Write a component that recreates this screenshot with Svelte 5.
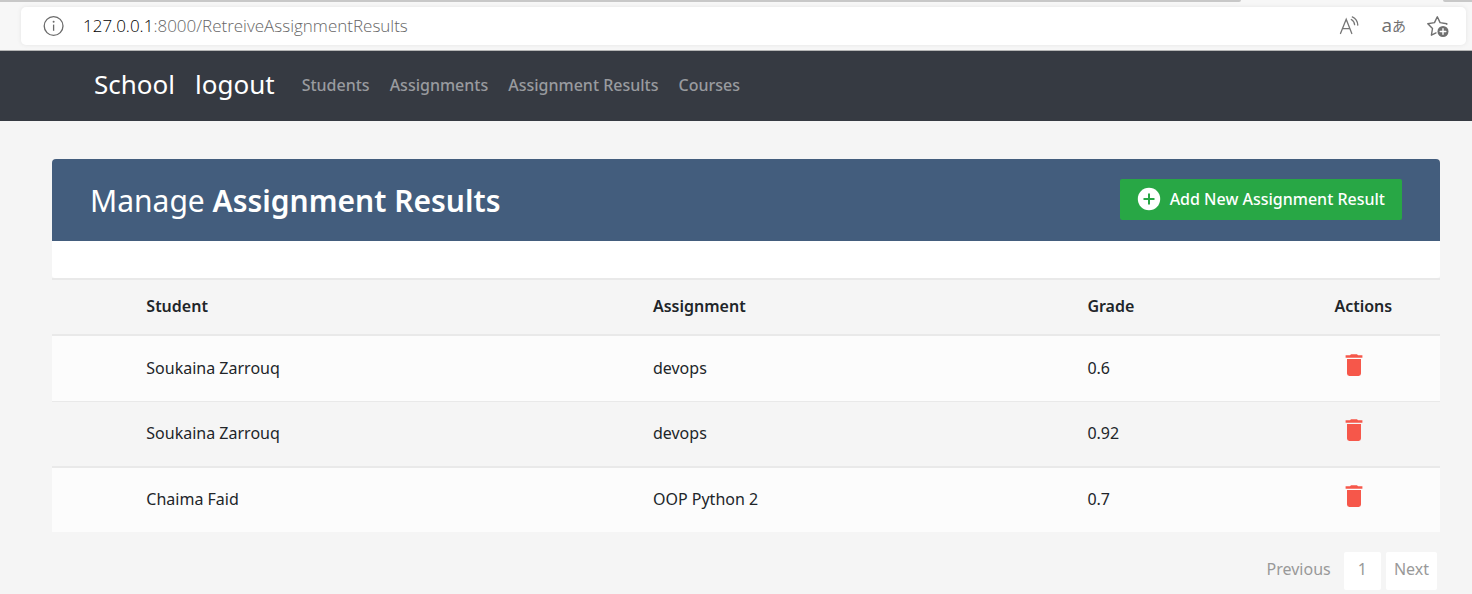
<script>
  const links = ['Students', 'Assignments', 'Assignment Results', 'Courses'];
  const results = [
    { student: 'Soukaina Zarrouq', assignment: 'devops', grade: '0.6' },
    { student: 'Soukaina Zarrouq', assignment: 'devops', grade: '0.92' },
    { student: 'Chaima Faid', assignment: 'OOP Python 2', grade: '0.7' }
  ];
</script>

<header class="browser">
  <div class="tabs"><span class="tab"></span><span class="tab end"></span></div>
  <div class="address">
    <svg width="22" height="22" viewBox="0 0 22 22" fill="none" stroke="#6b6b6b" stroke-width="1.3" aria-hidden="true">
      <circle cx="10.600" cy="11" r="9.4" />
      <path d="M10.600 9.600v6.200" />
      <circle cx="10.600" cy="6.800" r="1" fill="#6b6b6b" stroke="none" />
    </svg>
    <p class="url"><span>127.0.0.1</span>:8000/RetreiveAssignmentResults</p>
    <div class="tools">
      <button aria-label="Read aloud">
        <svg width="24" height="24" viewBox="0 0 24 24" fill="none" stroke="#767676" stroke-width="1.3" stroke-linecap="round">
          <path d="M3.500 19.500 9.200 5.300l5.600 14.200M5.500 14.700h7.400M14.300 5.500c2.200 1.200 3.200 3 3.300 5.200M15.300 2.900c3.500 1.600 5.300 4.600 5.500 8.200" />
        </svg>
      </button>
      <button class="translate" aria-label="Translate"><span>a</span><span class="kana">あ</span></button>
      <button aria-label="Add to favorites">
        <svg width="24" height="24" viewBox="0 0 24 24" fill="none" stroke="#707070" stroke-width="1.4" stroke-linejoin="round" stroke-linecap="round">
          <path d="M20.800 10.300v-.6l-6.700-1.100L11.300 2.800 8.500 8.600l-6.700 1.100 4.700 4.800-1.100 6.700 4.600-2.300" />
          <circle cx="17" cy="17.500" r="5.500" fill="#707070" stroke="none" />
          <path d="M17 14.700v5.600M14.200 17.500h5.600" stroke="#fff" />
        </svg>
      </button>
    </div>
  </div>
</header>

<nav>
  <a class="brand" href="#school">School</a>
  <a class="brand logout" href="#logout">logout</a>
  {#each links as link}
    <a href="#{link}">{link}</a>
  {/each}
</nav>

<main>
  <section class="title">
    <h2>Manage <b>Assignment Results</b></h2>
    <button class="add">
      <svg width="24" height="24" viewBox="0 0 24 24" aria-hidden="true">
        <circle cx="12" cy="12" r="11.200" fill="#fff" />
        <path d="M12 6.500v11M6.500 12h11" stroke="#28a745" stroke-width="2" />
      </svg>
      Add New Assignment Result
    </button>
  </section>
  <div class="card-foot"></div>
  <table>
    <colgroup>
      <col class="lead" /><col class="student" /><col class="assignment" /><col class="grade" /><col />
    </colgroup>
    <thead>
      <tr><th></th><th>Student</th><th>Assignment</th><th>Grade</th><th>Actions</th></tr>
    </thead>
    <tbody>
      {#each results as row}
        <tr>
          <td></td>
          <td>{row.student}</td>
          <td>{row.assignment}</td>
          <td>{row.grade}</td>
          <td>
            <button class="delete" aria-label="Delete result">
              <svg width="18" height="22" viewBox="0 0 18 22" fill="#f6574a">
                <path d="M.6 1.300H5L6 .2h6l1 1.100h4.400v2.500H.6zM2 5h14v14.500a2.400 2.400 0 0 1-2.400 2.400H4.400A2.400 2.400 0 0 1 2 19.500z" />
              </svg>
            </button>
          </td>
        </tr>
      {/each}
    </tbody>
  </table>
  <div class="pages">
    <a class="plain" href="#previous">Previous</a>
    <a href="#1" class="number">1</a>
    <a href="#next">Next</a>
  </div>
</main>

<style>
  :global(body) {
    margin: 0;
    background: #f5f5f5;
    color: #212529;
    font: 16px/24px "Noto Sans", sans-serif;
  }
  button { border: 0; padding: 0; background: none; font: inherit; cursor: pointer; }
  svg { display: block; }
  a { text-decoration: none; }

  .browser {
    background: #f7f7f7;
    border-bottom: 1px solid #b5b5b5;
    padding-bottom: 5px;
  }
  .tabs { display: flex; justify-content: space-between; height: 7px; }
  .tab { height: 2px; width: 84.3%; background: #c8c8c8; border-bottom-right-radius: 4px; }
  .tab.end { width: 2%; border-radius: 0 0 0 4px; }
  .address {
    display: flex;
    align-items: center;
    height: 38px;
    margin: 0 6px 0 21px;
    padding: 0 16px 0 22px;
    background: #fff;
    border-radius: 5px;
    box-shadow: 0 0 4px #e4e4e4;
  }
  .url {
    flex: 1;
    margin: 0 0 0 18px;
    color: #666;
    font: 300 17px/24px "Open Sans", sans-serif;
  }
  .url span { color: #000; }
  .tools { display: flex; align-items: center; gap: 20px; }
  .translate {
    display: flex;
    align-items: center;
    padding-bottom: 2px;
    color: #707070;
    font: 19px/24px "Open Sans", sans-serif;
  }
  .kana { font: 14px/24px "Noto Sans CJK JP", sans-serif; }

  nav {
    display: flex;
    align-items: center;
    gap: 20px;
    height: 68px;
    padding: 0 94px 2px;
    background: #363a42;
  }
  nav a { color: #999b9f; font-weight: 500; }
  nav a.brand { padding-bottom: 2px; color: #fff; font-size: 26px; font-weight: 400; }
  nav a.logout { margin-right: 7px; }

  main { padding: 38px 32px 4px 52px; }
  .title {
    display: flex;
    align-items: center;
    justify-content: space-between;
    height: 80px;
    padding: 0 38px 2px;
    background: #435d7d;
    color: #fff;
    border-radius: 4px 4px 0 0;
  }
  h2 { margin: 4px 0 0; font-size: 30px; line-height: 40px; font-weight: 400; }
  h2 b { font-weight: 600; }
  .add {
    display: flex;
    align-items: center;
    gap: 9px;
    height: 41px;
    padding: 0 17px;
    color: #fff;
    background: #28a745;
    border-radius: 2px;
    font-weight: 500;
  }
  .card-foot { height: 37px; background: #fff; border-radius: 0 0 3px 3px; }

  table { width: 100%; table-layout: fixed; border-collapse: separate; border-spacing: 0; }
  .lead { width: 5.5%; }
  .student { width: 36.5%; }
  .assignment { width: 31.3%; }
  .grade { width: 17.8%; }
  th, td { padding: 0 18px 2px; text-align: left; vertical-align: middle; }
  th {
    height: 52px;
    border-top: 2px solid #e9e9e9;
    border-bottom: 2px solid #e9e9e9;
    font-weight: 600;
  }
  td { height: 63px; border-bottom: 1px solid #e9e9e9; }
  tbody tr:nth-child(even) td { height: 62px; border-bottom-width: 2px; }
  tbody tr:last-child td { height: 62px; border-bottom: 0; }
  tbody tr:nth-child(odd) { background: #fcfcfc; }
  .delete { display: block; margin: 0 0 6px 11px; }

  .pages { display: flex; justify-content: flex-end; gap: 5px; margin: 20px 3px 0 0; }
  .pages a {
    padding: 5px 8px 9px;
    color: #999;
    background: #fff;
    border-radius: 2px;
  }
  .pages a.plain { background: none; }
  .pages a.number { padding: 5px 14px 9px; }
</style>
